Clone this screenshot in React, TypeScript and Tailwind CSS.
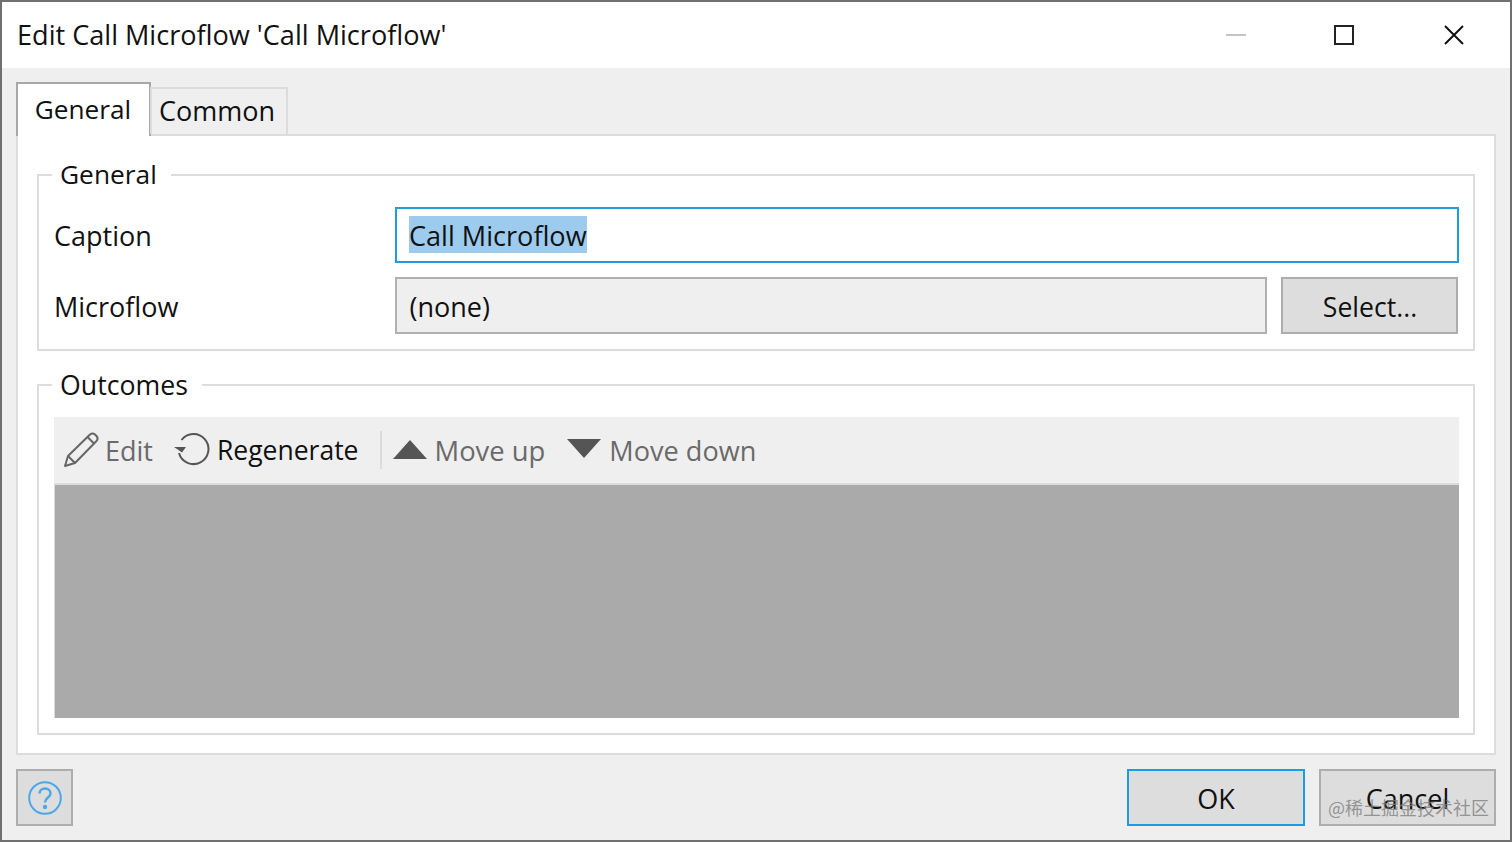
export default function App() {
  const font = "font-['Open_Sans','Noto_Sans',sans-serif]";
  return (
    <div className={`w-[1512px] h-[842px] border-2 border-[#707070] bg-[#efefef] flex flex-col text-[#111] ${font} overflow-hidden relative`}>
      <div className="h-[66px] bg-white flex items-center shrink-0">
        <div className="ml-[15px] text-[27.1px] leading-none flex-1 whitespace-nowrap pb-[1px]">Edit Call Microflow 'Call Microflow'</div>
        <svg width="20" height="20" viewBox="0 0 20 20" className="mr-[88px]"><path d="M0 10H20" stroke="#c4c4c4" strokeWidth="2" /></svg>
        <svg width="20" height="20" viewBox="0 0 20 20" className="mr-[90px]"><rect x="1" y="1" width="18" height="18" fill="none" stroke="#222" strokeWidth="2" /></svg>
        <svg width="20" height="20" viewBox="0 0 20 20" className="mr-[46px]"><path d="M1 1L19 19M19 1L1 19" stroke="#111" strokeWidth="2" /></svg>
      </div>
      <div className="flex-1 flex flex-col px-[14px]">
        <div className="h-[66px] flex items-end shrink-0 relative z-10">
          <div className="w-[135px] h-[54px] -mb-[2px] bg-white border-2 border-b-0 border-[#a8a8a8] flex items-center justify-center text-[26.2px] pb-[1px] pr-[1px]">General</div>
          <div className="w-[138px] h-[47px] -ml-px bg-[#efefef] border-2 border-b-0 border-[#dcdcdc] flex items-center justify-center text-[27px] pr-[4px]">Common</div>
        </div>
        <div className="h-[621px] bg-white border-2 border-[#dcdcdc] px-[19px] pt-[23px] shrink-0">
          <fieldset className="h-[192px] border-2 border-[#dcdcdc] pl-[15px] pr-[14px]">
            <legend className="-ml-[2px] pl-[8px] pr-[14px] text-[26.3px] leading-[32px]"><span className="inline-block -translate-y-px">General</span></legend>
            <div className="pt-[16px] flex flex-col gap-[14px]">
              <div className="flex items-center">
                <div className="w-[341px] text-[27px] shrink-0 pt-[2px]">Caption</div>
                <div className="w-[1064px] h-[56px] border-2 border-[#1f9ce0] flex items-center pl-[12px] text-[27.1px]">
                  <span className="bg-[#9ccbee] h-[37px] leading-[39px] -mt-[1px]">Call Microflow</span>
                </div>
              </div>
              <div className="flex items-center">
                <div className="w-[341px] text-[27px] shrink-0 pt-[4px]">Microflow</div>
                <div className="w-[872px] h-[57px] border-2 border-[#b0b0b0] bg-[#efefef] flex items-center pl-[12.5px] pt-[4px] text-[27px]">(none)</div>
                <div className="w-[177px] h-[57px] ml-[14px] border-2 border-[#adadad] bg-[#dddddd] flex items-center justify-center pt-[4px] pl-[1px] text-[26.6px]">Select...</div>
              </div>
            </div>
          </fieldset>
          <fieldset className="h-[366px] mt-[18px] border-2 border-[#dcdcdc] pl-[15px] pr-[14px]">
            <legend className="-ml-[2px] pl-[8px] pr-[14px] text-[26.7px] leading-[32px]">Outcomes</legend>
            <div className="pt-[16px]">
              <div className="h-[68px] bg-[#efefef] flex items-center text-[27px] border-b-2 border-[#dcdcdc]">
                <svg width="36" height="36" viewBox="0 0 36 36" className="ml-[9px]" fill="none" stroke="#666" strokeWidth="2" strokeLinejoin="round">
                  <path d="M2 34L5 24L27 2.5C28.5 1.2 30.5 1.2 32 2.5L33.5 4C34.8 5.5 34.8 7.5 33.5 9L12 31Z" />
                  <path d="M5 24L12 31M24.5 5L31 11.5" />
                </svg>
                <span className="ml-[6px] text-[#6a6a6a] pt-[2px]">Edit</span>
                <svg width="36" height="36" viewBox="0 0 36 36" className="ml-[21px] mt-[1px]" fill="none">
                  <path d="M7.5 7A15 15 0 1 1 5 20" stroke="#555" strokeWidth="2" />
                  <path d="M0 14H12L8 19.5Z" fill="#555" />
                </svg>
                <span className="ml-[7px] text-[26.5px] pt-[2px]">Regenerate</span>
                <div className="w-[2px] h-[38px] ml-[21px] bg-[#dcdcdc]"></div>
                <svg width="34" height="20" viewBox="0 0 34 20" className="ml-[11px]"><path d="M17 0L34 19H0Z" fill="#555" /></svg>
                <span className="ml-[8px] text-[27.4px] text-[#6a6a6a] pt-[2px]">Move up</span>
                <svg width="34" height="20" viewBox="0 0 34 20" className="ml-[22px] -mt-[3px]"><path d="M0 0H34L17 19Z" fill="#555" /></svg>
                <span className="ml-[8px] text-[#6a6a6a] text-[27.1px] pt-[2px]">Move down</span>
              </div>
              <div className="h-[233px] bg-[#aaaaaa] border-l border-[#dcdcdc]"></div>
            </div>
          </fieldset>
        </div>
        <div className="flex-1 flex pt-[14px]">
          <div className="w-[57px] h-[57px] border-2 border-[#adadad] bg-[#dddddd] flex items-center justify-center">
            <svg width="34" height="34" viewBox="0 0 34 34" fill="none">
              <circle cx="17" cy="17" r="15.8" stroke="#4aa8ea" strokeWidth="2" />
              <path d="M11.5 12.5C11.5 9.5 14 7.5 17 7.5C20 7.5 22.5 9.5 22.5 12.5C22.5 16.5 17 16.5 17 21.5" stroke="#4aa8ea" strokeWidth="2.5" />
              <circle cx="17" cy="26" r="2.2" fill="#4aa8ea" />
            </svg>
          </div>
          <div className="flex-1"></div>
          <div className="w-[178px] h-[57px] border-2 border-[#1f9ce0] bg-[#dddddd] flex items-center justify-center pt-[4px] text-[27px]">OK</div>
          <div className="w-[177px] h-[57px] ml-[14px] border-2 border-[#adadad] bg-[#dddddd] flex items-center justify-center pt-[4px] text-[27px]">Cancel</div>
        </div>
      </div>
      <div className="absolute left-[1326px] top-[793px] text-[18px] leading-[24px] whitespace-nowrap text-[#7f7f7f]/80 font-['Noto_Sans_CJK_SC',sans-serif]">@稀土掘金技术社区</div>
    </div>
  );
}
